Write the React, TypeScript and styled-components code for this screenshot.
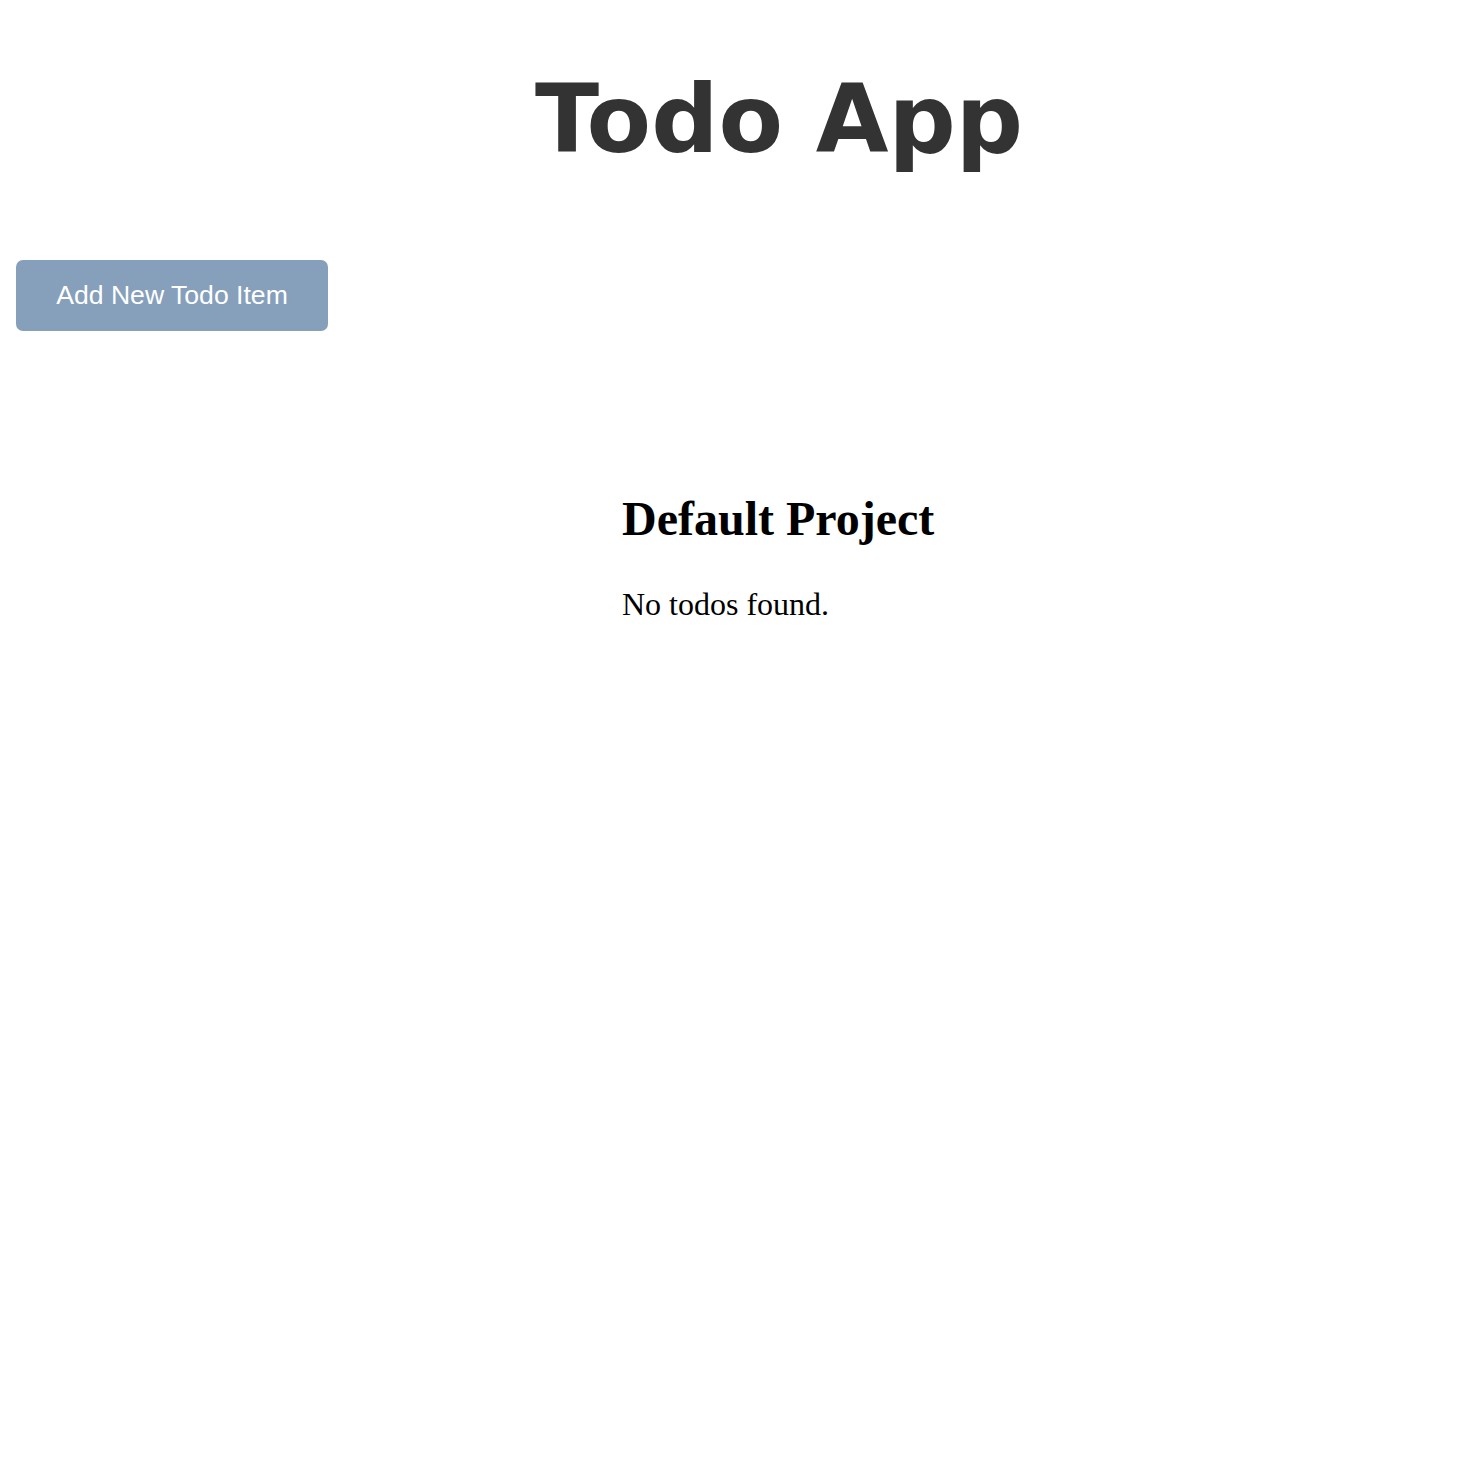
import React from "react";
import styled, { createGlobalStyle } from "styled-components";

const Global = createGlobalStyle`
  html, body { margin: 0; padding: 0; background: #ffffff; }
  body { font-family: "Liberation Serif", serif; color: #000; }
`;

const Page = styled.div`
  display: flex;
  flex-direction: column;
  padding: 0 16px;
`;

const Header = styled.header`
  display: flex;
  justify-content: center;
  padding: 65px 0 0 82px;
`;

const Title = styled.h1`
  margin: 0;
  font-family: "DejaVu Sans", sans-serif;
  font-weight: bold;
  font-size: 94px;
  line-height: 110px;
  color: #333333;
`;

const Toolbar = styled.div`
  display: flex;
  margin-top: 85px;
`;

const AddButton = styled.button`
  width: 312px;
  height: 71px;
  padding: 0;
  border: none;
  border-radius: 7px;
  background: #869fba;
  color: #ffffff;
  font-family: "Liberation Sans", Arial, sans-serif;
  font-size: 26.6px;
  cursor: pointer;
`;

const Main = styled.main`
  display: flex;
  flex-direction: column;
  padding: 160px 0 0 606px;
`;

const ProjectTitle = styled.h2`
  margin: 0;
  font-family: "Liberation Serif", serif;
  font-weight: bold;
  font-size: 48px;
  line-height: 56px;
`;

const Empty = styled.p`
  margin: 39px 0 0;
  font-family: "Liberation Serif", serif;
  font-size: 32px;
  line-height: 37px;
`;

export default function App() {
  return (
    <>
      <Global />
      <Page>
        <Header>
          <Title>Todo App</Title>
        </Header>
        <Toolbar>
          <AddButton>Add New Todo Item</AddButton>
        </Toolbar>
        <Main>
          <ProjectTitle>Default Project</ProjectTitle>
          <Empty>No todos found.</Empty>
        </Main>
      </Page>
    </>
  );
}
